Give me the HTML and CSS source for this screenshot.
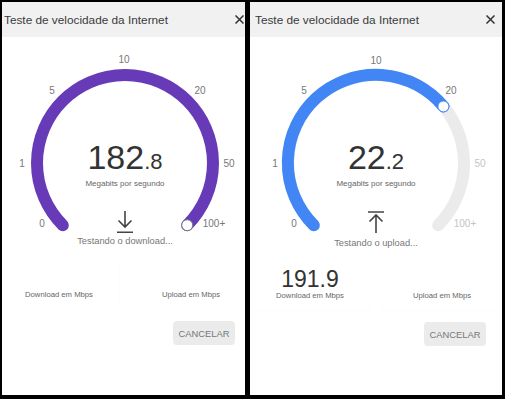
FILE: index.html
```html
<!DOCTYPE html>
<html lang="pt">
<head>
<meta charset="utf-8">
<title>Teste de velocidade da Internet</title>
<link rel="stylesheet" href="styles.css">
</head>
<body>
<div class="panel panel--left">
  <div class="dialog">
    <div class="header">
      <span class="title">Teste de velocidade da Internet</span>
      <svg class="close" width="9" height="9" viewBox="0 0 9 9"><path d="M0.5 0.5 L8.5 8.5 M8.5 0.5 L0.5 8.5" stroke="#333" stroke-width="1.5" fill="none"/></svg>
    </div>
    <svg class="gauge" width="252" height="198" viewBox="0 0 252 198">
      <path d="M63.8 188.2 A88 88 0 1 1 188.2 188.2" stroke="#673ab7" stroke-width="12" fill="none" stroke-linecap="round"/>
      <circle cx="188.2" cy="188.2" r="5.5" fill="#fff" stroke="#777" stroke-width="1"/>
      <g class="ticks">
        <text x="43" y="189.5">0</text>
        <text x="23" y="129.5">1</text>
        <text x="53" y="56.5">5</text>
        <text x="125" y="26">10</text>
        <text x="201" y="56.5">20</text>
        <text x="230" y="129.5">50</text>
        <text x="215" y="189.5">100+</text>
      </g>
      <text class="value" x="126" y="132"><tspan class="value-int">182</tspan><tspan class="value-dec">.8</tspan></text>
      <text class="unit" x="126" y="149.3">Megabits por segundo</text>
      <path d="M126 174 V190.5 M119.5 183.5 L126 190 L132.5 183.5 M118 195.2 H134" stroke="#444" stroke-width="1.6" fill="none"/>
    </svg>
    <div class="status">Testando o download...</div>
    <div class="results">
      <div class="cell"><span class="cell-label">Download em Mbps</span></div>
      <div class="cell"><span class="cell-label">Upload em Mbps</span></div>
    </div>
    <div class="actions"><button class="btn">CANCELAR</button></div>
  </div>
</div>
<div class="panel">
  <div class="dialog">
    <div class="header">
      <span class="title">Teste de velocidade da Internet</span>
      <svg class="close" width="9" height="9" viewBox="0 0 9 9"><path d="M0.5 0.5 L8.5 8.5 M8.5 0.5 L0.5 8.5" stroke="#333" stroke-width="1.5" fill="none"/></svg>
    </div>
    <svg class="gauge" width="252" height="198" viewBox="0 0 252 198">
      <path d="M63.8 188.2 A88 88 0 1 1 188.2 188.2" stroke="#ebebeb" stroke-width="12" fill="none" stroke-linecap="round"/>
      <path d="M63.8 188.2 A88 88 0 1 1 193.4 69.4" stroke="#4285f4" stroke-width="12" fill="none" stroke-linecap="round"/>
      <circle cx="193.4" cy="69.4" r="5.5" fill="#fff" stroke="#4285f4" stroke-width="1"/>
      <g class="ticks">
        <text x="44" y="189.5">0</text>
        <text x="25" y="129.5">1</text>
        <text x="54" y="57">5</text>
        <text x="126" y="27">10</text>
        <text x="201" y="56.5">20</text>
        <text class="off" x="230" y="129.5">50</text>
        <text class="off" x="215" y="189.5">100+</text>
      </g>
      <text class="value" x="126" y="132"><tspan class="value-int">22</tspan><tspan class="value-dec">.2</tspan></text>
      <text class="unit" x="126" y="149.3">Megabits por segundo</text>
      <path d="M118 175 H134 M119.5 184.5 L126 178 L132.5 184.5 M126 178.5 V196" stroke="#444" stroke-width="1.6" fill="none"/>
    </svg>
    <div class="status status--low">Testando o upload...</div>
    <div class="results">
      <div class="cell"><span class="cell-value">191.9</span><span class="cell-label">Download em Mbps</span></div>
      <div class="cell"><span class="cell-label">Upload em Mbps</span></div>
    </div>
    <div class="actions"><button class="btn">CANCELAR</button></div>
  </div>
</div>
</body>
</html>
```
FILE: styles.css
```css
html, body {
  margin: 0;
  height: 399px;
  overflow: hidden;
}
body {
  background: #000;
  display: flex;
  gap: 5px;
  padding: 2px 0 0 2px;
  box-sizing: border-box;
  font-family: "Liberation Sans", Arial, sans-serif;
}
.panel {
  width: 252px;
  height: 393px;
  overflow: hidden;
  flex: none;
}
.panel--left {
  width: 243px;
}
.panel--left .dialog {
  margin-left: -3px;
}
.dialog {
  width: 252px;
  height: 393px;
  background: #fff;
  display: flex;
  flex-direction: column;
}
.header {
  height: 35px;
  flex: none;
  background: #f1f1f1;
  display: flex;
  align-items: center;
  justify-content: space-between;
  padding: 0 7px 0 5px;
}
.title {
  font-size: 11.8px;
  color: #3a3a3a;
}
.close {
  display: block;
}
.gauge {
  display: block;
  flex: none;
}
.ticks text {
  font-size: 10px;
  fill: #777;
  text-anchor: middle;
}
.ticks text.off {
  fill: #c4c4c4;
}
.value {
  text-anchor: middle;
  fill: #333;
}
.value-int {
  font-size: 34px;
}
.value-dec {
  font-size: 22px;
}
.unit {
  font-size: 8px;
  fill: #666;
  text-anchor: middle;
}
.status {
  height: 12px;
  line-height: 12px;
  font-size: 9.3px;
  color: #777;
  text-align: center;
  flex: none;
}
.status--low {
  margin-top: 2px;
}
.results {
  margin-top: 11px;
  display: grid;
  grid-template-columns: 120px 120px;
  gap: 12px;
  height: 52px;
  flex: none;
}
.status--low + .results {
  margin-top: 10px;
}
.cell {
  display: flex;
  flex-direction: column;
  align-items: center;
  justify-content: flex-end;
  padding-bottom: 10px;
  box-shadow: 0 0 1px rgba(0, 0, 0, 0.05);
}
.cell-value {
  font-size: 23px;
  line-height: 20px;
  color: #333;
  margin-bottom: 2px;
}
.cell-label {
  font-size: 7.7px;
  line-height: 10px;
  color: #666;
}
.actions {
  display: flex;
  justify-content: flex-end;
  padding-right: 16px;
  margin-top: 11px;
}
.btn {
  height: 24px;
  width: 62px;
  padding: 0;
  border: none;
  border-radius: 4px;
  background: #ebebeb;
  color: #777;
  font-family: "Liberation Sans", Arial, sans-serif;
  font-size: 9.4px;
}
```
